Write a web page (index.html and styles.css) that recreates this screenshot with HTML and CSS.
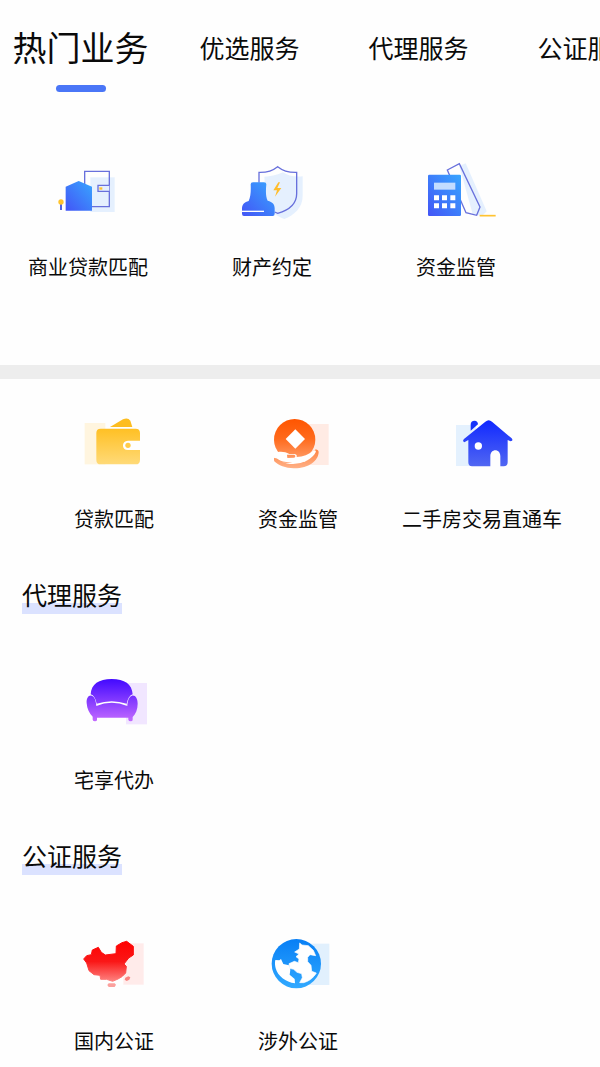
FILE: index.html
```html
<!DOCTYPE html>
<html lang="zh-CN">
<head>
    <meta charset="UTF-8">
    <meta name="viewport" content="width=device-width, initial-scale=1.0">
    <title>热门业务</title>
    <link rel="stylesheet" href="styles.css">
</head>
<body>
    <nav class="tabs">
        <button class="tab active" type="button">热门业务</button>
        <button class="tab" type="button">优选服务</button>
        <button class="tab" type="button">代理服务</button>
        <button class="tab" type="button">公证服务</button>
    </nav>

    <section class="hot">
        <a class="service" href="#">
            <svg class="icon" viewBox="-6 6 300 240" aria-hidden="true">
                <defs>
                    <linearGradient id="blue" x1="1" y1="0" x2="0" y2="1">
                        <stop offset="0" stop-color="#38a6ff"/>
                        <stop offset="1" stop-color="#4355f6"/>
                    </linearGradient>
                </defs>
                <path d="M151 82h73v104h-73z" fill="#e5f0fe"/>
                <path d="M134 64h74v106h-74z" fill="none" stroke="#6870dc" stroke-width="4"/>
                <path d="M208 106h-34v18h34" fill="#e5f0fe" stroke="#6870dc" stroke-width="4"/>
                <path d="M178 112h9v7h-9z" fill="#ffc02e"/>
                <path d="M77 110l39-17 40 17v72H77z" fill="url(#blue)"/>
                <path d="M60 160h6v20h-6z" fill="#5263e4"/>
                <circle cx="63" cy="156" r="8" fill="#ffc42e"/>
            </svg>
            <span>商业贷款匹配</span>
        </a>
        <a class="service" href="#">
            <svg class="icon" viewBox="-9 6 300 240" aria-hidden="true">
                <path d="M118 80q25 0 56-13 20 15 59 12v58c0 36-25 58-55 70-25-9-45-24-55-47z" fill="#e5f0fe"/>
                <path d="M102 98V67q34 1 56-17 22 18 57 17v64c0 30-23 49-57 59l-9-4" fill="none" stroke="#6870dc" stroke-width="4"/>
                <path d="M160 97l-15 24h11l-6 19 19-26h-12l8-17z" fill="#ffbd2d"/>
                <path d="M77 103q0-6 7-6h33q7 0 7 6c-2 20-2 38 4 49 15 4 21 11 21 23v16q0 7-6 7H57q-6 0-6-7v-16c0-12 8-19 20-22 6-14 7-30 6-50z" fill="url(#blue)"/>
                <path d="M51 184h66" stroke="#fff" stroke-width="4"/>
            </svg>
            <span>财产约定</span>
        </a>
        <a class="service" href="#">
            <svg class="icon" viewBox="-12 6 300 240" aria-hidden="true">
                <path d="M148 48l19-8 63 144-14 14-28-6z" fill="#e5f0fe"/>
                <path d="M112 60l36-19 62 130-10 25-32-8z" fill="none" stroke="#6870dc" stroke-width="4"/>
                <path d="M209 197h48" stroke="#ffc331" stroke-width="5"/>
                <rect x="54" y="74" width="99" height="124" rx="4" fill="url(#blue)"/>
                <path d="M72 98h64v21H72z" fill="#c2dcff"/>
                <path d="M72 136h15v15H72zM96 136h15v15H96zM121 136h15v15h-15zM72 160h15v15H72zM96 160h15v15H96zM121 160h15v15h-15z" fill="#fff"/>
            </svg>
            <span>资金监管</span>
        </a>
    </section>

    <main class="content">
        <section class="services">
            <a class="service" href="#">
                <svg class="icon" viewBox="-18 -3 300 240" aria-hidden="true">
                    <defs>
                        <linearGradient id="gold" x1="0" y1="0" x2="0" y2="1">
                            <stop offset="0" stop-color="#ffc024"/>
                            <stop offset="1" stop-color="#ffda78"/>
                        </linearGradient>
                    </defs>
                    <path d="M44 54h62v124H44z" fill="#fff5df"/>
                    <path d="M120 66l39-23q15-6 22 4l6 19z" fill="#fdbd20"/>
                    <path d="M92 71h105q13 0 13 13v23h-36c-20 0-20 28 0 28h36v29q0 14-13 14H92q-13 0-13-14V84q0-13 13-13z" fill="url(#gold)"/>
                    <circle cx="174" cy="121" r="8" fill="#ffcb49"/>
                </svg>
                <span>贷款匹配</span>
            </a>
            <a class="service" href="#">
                <svg class="icon" viewBox="-21 -3 300 240" aria-hidden="true">
                    <defs>
                        <linearGradient id="orange" gradientUnits="userSpaceOnUse" x1="0" y1="42" x2="0" y2="190">
                            <stop offset="0" stop-color="#ff5500"/>
                            <stop offset=".4" stop-color="#ff6a1c"/>
                            <stop offset="1" stop-color="#ffb187"/>
                        </linearGradient>
                    </defs>
                    <path d="M160 57h61v123h-61z" fill="#ffebe4"/>
                    <circle cx="119" cy="104" r="62" fill="url(#orange)"/>
                    <path d="M121 73l29 29-29 29-29-29z" fill="#fff"/>
                    <path d="M176 138C180 131 191 132 191 142C190 168 160 191 116 190C92 189 70 181 57 168L60 160L150 170Z" fill="url(#orange)"/>
                    <path d="M56 146C72 137 88 139 103 147H119C125 148 126 152 125 156C145 155 160 148 176 137C181 134 184 138 182 142C172 162 146 176 114 177C90 177 68 168 56 146Z" fill="#fff"/>
                    <path d="M57 166C76 174 94 176 112 173C94 172 74 168 57 158Z" fill="url(#orange)"/>
                    <path d="M96 149h22q6 4 0 9l-21 1z" fill="url(#orange)"/>
                </svg>
                <span>资金监管</span>
            </a>
            <a class="service" href="#">
                <svg class="icon" viewBox="-24 -3 300 240" aria-hidden="true">
                    <defs>
                        <linearGradient id="indigo" x1="0" y1="0" x2="0" y2="1">
                            <stop offset="0" stop-color="#1028ff"/>
                            <stop offset="1" stop-color="#5167f2"/>
                        </linearGradient>
                    </defs>
                    <path d="M48 60h60v123H48z" fill="#e4f1fe"/>
                    <path d="M92 77V59q0-12 12-12 9 0 10 11z" fill="#1733fa"/>
                    <path d="M136 50q10-9 20 0l59 50q6 8-3 9l-9-4v67q0 12-12 12h-10v-30c0-24-30-24-30 0v30H96q-11 0-11-12v-67l-12 7q-7-4-1-10z" fill="url(#indigo)"/>
                    <circle cx="115" cy="123" r="11" fill="#fff"/>
                </svg>
                <span>二手房交易直通车</span>
            </a>
        </section>

        <h2 class="section-title">代理服务</h2>
        <section class="services">
            <a class="service" href="#">
                <svg class="icon" viewBox="-18 0 300 240" aria-hidden="true">
                    <defs>
                        <linearGradient id="purple" gradientUnits="userSpaceOnUse" x1="0" y1="42" x2="0" y2="168">
                            <stop offset="0" stop-color="#4209ff"/>
                            <stop offset="1" stop-color="#c269ff"/>
                        </linearGradient>
                    </defs>
                    <path d="M168 54h63v124h-63z" fill="#f1e6ff"/>
                    <path d="M62 88c2-31 24-46 63-46s61 15 63 46q-13 4-18 28-45-15-90 0-5-24-18-28z" fill="url(#purple)"/>
                    <path d="M65 92c9 2 13 16 14 31q46-20 93 0c1-15 5-29 14-31 10-2 17 8 17 24 0 17-6 31-15 40v8q0 5-6 5t-7-5v-6H81v6q0 5-6 5t-7-5v-9c-10-9-17-24-18-40-1-15 5-25 15-23z" fill="url(#purple)"/>
                </svg>
                <span>宅享代办</span>
            </a>
        </section>

        <h2 class="section-title">公证服务</h2>
        <section class="services">
            <a class="service" href="#">
                <svg class="icon" viewBox="-18 3 300 240" aria-hidden="true">
                    <defs>
                        <linearGradient id="red" gradientUnits="userSpaceOnUse" x1="0" y1="45" x2="0" y2="188">
                            <stop offset="0" stop-color="#ff0000"/>
                            <stop offset=".45" stop-color="#fa1717"/>
                            <stop offset="1" stop-color="#ffa5a2"/>
                        </linearGradient>
                    </defs>
                    <path d="M160 55h61v124h-61z" fill="#ffebea"/>
                    <path d="M41 102L50 92L64 89L67 75L85 67L94 82L106 90L138 86L139 63L156 53L170 49L190 64L190 90L176 99L162 117L169 124L167 144L156 155L144 162L128 169L110 163L92 163L90 151L72 149L57 137L50 114Z" fill="url(#red)" stroke="url(#red)" stroke-width="3" stroke-linejoin="round"/>
                    <path d="M116 175L134 175L138 179L134 186L116 186L112 180Z" fill="#fba09d"/>
                    <path d="M166 158L175 154L181 157L178 164L170 168L164 164Z" fill="#f98380"/>
                </svg>
                <span>国内公证</span>
            </a>
            <a class="service" href="#">
                <svg class="icon" viewBox="-21 3 300 240" aria-hidden="true">
                    <defs>
                        <linearGradient id="sky" x1="0" y1="0" x2="0" y2="1">
                            <stop offset="0" stop-color="#087ff5"/>
                            <stop offset="1" stop-color="#31a9ff"/>
                        </linearGradient>
                    </defs>
                    <path d="M160 56h63v124h-63z" fill="#e1f0fd"/>
                    <circle cx="124" cy="116" r="74" fill="url(#sky)"/>
                    <path d="M61 105L73 106L78 102L85 117L102 121L106 134L104 149L119 162L120 175C92 172 68 153 62 130C60 121 59 113 61 105Z" fill="#fff"/>
                    <path d="M134 54L141 60L160 62L175 76L182 92L165 89L158 97L158 110L168 121L170 139L184 144C176 158 162 169 146 173L134 173L142 158L140 146L126 142L116 133L104 130L102 116L118 109L130 113L132 102L123 95L132 87L119 81L133 72Z" fill="#fff" stroke="#fff" stroke-width="2" stroke-linejoin="round"/>
                </svg>
                <span>涉外公证</span>
            </a>
        </section>
    </main>
</body>
</html>
```

FILE: styles.css
```css
* {
    margin: 0;
    padding: 0;
    box-sizing: border-box;
}

body {
    background: #fefefe;
    color: #0a0a0a;
    font-family: "Noto Sans CJK SC", "Noto Sans", sans-serif;
    font-size: 20px;
}

/* top tabs, scroll sideways */
.tabs {
    display: flex;
    margin-left: -4px;
    padding-top: 22px;
    overflow-x: auto;
    scrollbar-width: none;
}

.tab {
    flex: 0 0 169px;
    display: flex;
    flex-direction: column;
    align-items: center;
    gap: 13px;
    border: none;
    background: none;
    color: inherit;
    font-family: inherit;
    font-size: 25px;
    line-height: 50px;
    white-space: nowrap;
    cursor: pointer;
}

.tab::after {
    content: "";
    width: 50px;
    height: 7px;
    border-radius: 4px;
}

.tab.active {
    font-size: 34px;
}

.tab.active::after {
    background: #4a76f7;
}

.hot {
    display: grid;
    grid-template-columns: repeat(3, 1fr);
    gap: 64px;
    padding: 60px 84px 83px 28px;
    border-bottom: 14px solid #ededed;
}

.content {
    padding: 25px 26px 10px 22px;
}

.services {
    display: grid;
    grid-template-columns: repeat(3, 1fr);
}

.service {
    display: flex;
    flex-direction: column;
    align-items: center;
    gap: 20px;
    color: inherit;
    line-height: 30px;
    text-decoration: none;
    white-space: nowrap;
}

.icon {
    display: block;
    width: 100px;
    height: 80px;
}

.section-title {
    width: fit-content;
    margin: 44px 0 51px;
    padding-bottom: 4px;
    background: linear-gradient(#dbe2ff, #dbe2ff) bottom / 100% 11px no-repeat;
    font-size: 25px;
    font-weight: 400;
    line-height: 32px;
}
```
